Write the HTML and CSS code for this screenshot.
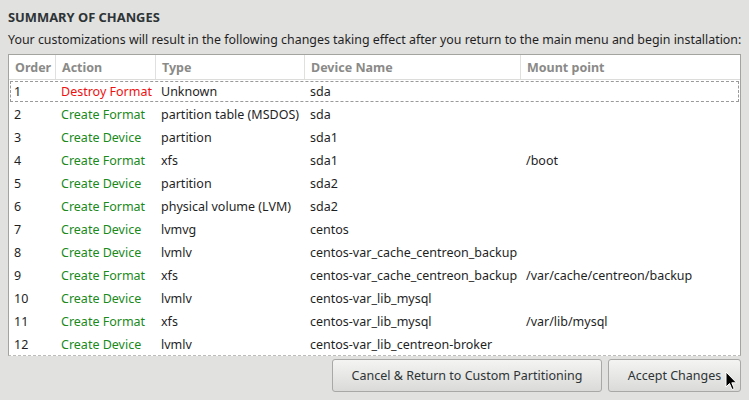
FILE: index.html
```html
<!DOCTYPE html>
<html>
<head>
<meta charset="utf-8">
<link rel="stylesheet" href="styles.css">
</head>
<body>
<div class="dialog">
  <h1 class="title">SUMMARY OF CHANGES</h1>
  <p class="intro">Your customizations will result in the following changes taking effect after you return to the main menu and begin installation:</p>
  <div class="table">
    <div class="row head">
      <div class="cell">Order</div><div class="cell">Action</div><div class="cell">Type</div><div class="cell">Device Name</div><div class="cell">Mount point</div>
    </div>
    <div class="row focus">
      <div class="cell">1</div><div class="cell destroy">Destroy Format</div><div class="cell">Unknown</div><div class="cell">sda</div><div class="cell"></div>
    </div>
    <div class="row">
      <div class="cell">2</div><div class="cell create">Create Format</div><div class="cell">partition table (MSDOS)</div><div class="cell">sda</div><div class="cell"></div>
    </div>
    <div class="row">
      <div class="cell">3</div><div class="cell create">Create Device</div><div class="cell">partition</div><div class="cell">sda1</div><div class="cell"></div>
    </div>
    <div class="row">
      <div class="cell">4</div><div class="cell create">Create Format</div><div class="cell">xfs</div><div class="cell">sda1</div><div class="cell">/boot</div>
    </div>
    <div class="row">
      <div class="cell">5</div><div class="cell create">Create Device</div><div class="cell">partition</div><div class="cell">sda2</div><div class="cell"></div>
    </div>
    <div class="row">
      <div class="cell">6</div><div class="cell create">Create Format</div><div class="cell">physical volume (LVM)</div><div class="cell">sda2</div><div class="cell"></div>
    </div>
    <div class="row">
      <div class="cell">7</div><div class="cell create">Create Device</div><div class="cell">lvmvg</div><div class="cell">centos</div><div class="cell"></div>
    </div>
    <div class="row">
      <div class="cell">8</div><div class="cell create">Create Device</div><div class="cell">lvmlv</div><div class="cell">centos-var_cache_centreon_backup</div><div class="cell"></div>
    </div>
    <div class="row">
      <div class="cell">9</div><div class="cell create">Create Format</div><div class="cell">xfs</div><div class="cell">centos-var_cache_centreon_backup</div><div class="cell">/var/cache/centreon/backup</div>
    </div>
    <div class="row">
      <div class="cell">10</div><div class="cell create">Create Device</div><div class="cell">lvmlv</div><div class="cell">centos-var_lib_mysql</div><div class="cell"></div>
    </div>
    <div class="row">
      <div class="cell">11</div><div class="cell create">Create Format</div><div class="cell">xfs</div><div class="cell">centos-var_lib_mysql</div><div class="cell">/var/lib/mysql</div>
    </div>
    <div class="row">
      <div class="cell">12</div><div class="cell create">Create Device</div><div class="cell">lvmlv</div><div class="cell">centos-var_lib_centreon-broker</div><div class="cell"></div>
    </div>
  </div>
  <div class="buttons">
    <button class="btn cancel">Cancel &amp; Return to Custom Partitioning</button>
    <button class="btn accept">Accept Changes</button>
  </div>
  <svg class="cursor" width="13" height="20" viewBox="0 0 13 20"><path d="M1 1 L1 16 L4.5 12.5 L7 18.5 L9.2 17.6 L6.8 11.8 L11.5 11.8 Z" fill="#000" stroke="#fff" stroke-width="1"/></svg>
</div>
</body>
</html>
```
FILE: styles.css
```css
html, body {
  margin: 0;
  padding: 0;
  background: #e1e1df;
}
.dialog {
  position: relative;
  width: 749px;
  height: 400px;
  box-sizing: border-box;
  padding: 9px 8px 0 8px;
  font-family: "Noto Sans", "DejaVu Sans", sans-serif;
  font-size: 12.5px;
  color: #1f1f1f;
}
.title {
  margin: 0;
  font-size: 12.9px;
  font-weight: bold;
  line-height: 16px;
  color: #2e3436;
}
.intro {
  margin: 7px 0 0 0;
  font-size: 12.4px;
  line-height: 16px;
  white-space: nowrap;
}
.table {
  margin-top: 6px;
  height: 300px;
  border: 1px solid #a3a3a0;
  border-bottom: 1px dashed #bdbdbb;
  background: #fff;
  overflow: hidden;
}
.row {
  display: grid;
  grid-template-columns: 47px 100px 149px 216px 1fr;
  height: 23px;
  align-items: center;
  white-space: nowrap;
}
.row .cell {
  padding-left: 5px;
  overflow: hidden;
}
.row.head {
  height: 24px;
  border-bottom: 1px solid #dcdcda;
  align-items: stretch;
  color: #8a8a88;
  font-weight: bold;
}
.row.head .cell {
  padding-left: 6px;
  display: flex;
  align-items: center;
  border-right: 1px solid #e0e0de;
}
.row.head .cell:last-child {
  border-right: none;
}
.row.focus {
  outline: 1px dashed #9a9a9a;
  outline-offset: -2px;
}
.destroy { color: #ee1111; }
.create { color: #1a8a1a; }
.buttons {
  display: flex;
  justify-content: flex-end;
  gap: 6px;
  margin-top: 3px;
}
.btn {
  height: 33px;
  border: 1px solid #a8a8a6;
  border-radius: 3px;
  background: linear-gradient(#f4f4f3, #dadad8);
  font-family: "Noto Sans", "DejaVu Sans", sans-serif;
  font-size: 12.5px;
  color: #2e3436;
  padding: 0 10px;
}
.btn.cancel { width: 270px; }
.btn.accept { width: 133px; }
.cursor {
  position: absolute;
  left: 725px;
  top: 371px;
}
```
